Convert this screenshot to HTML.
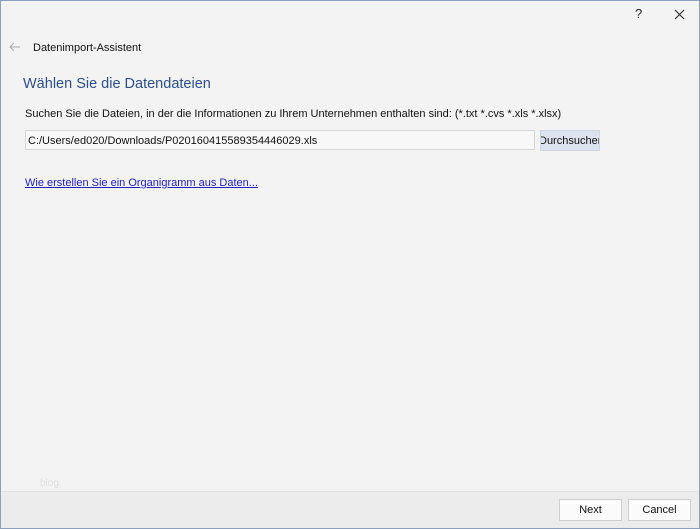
<!DOCTYPE html>
<html><head><meta charset="utf-8"><style>
*{margin:0;padding:0;box-sizing:border-box}
body{width:700px;height:529px;background:#fff;font-family:"Segoe UI","Liberation Sans",sans-serif;overflow:hidden;position:relative}
.win{position:absolute;left:0;top:0;width:700px;height:529px;border:1px solid #8aa0bd;background:#f3f3f3}
.t{position:absolute;white-space:nowrap}
</style></head><body>
<div class="win">
<div class="t" style="left:634px;top:5px;font-size:13px;color:#222">?</div>
<svg style="position:absolute;left:673px;top:8px" width="11" height="11"><path d="M1 1L10 10M10 1L1 10" stroke="#333" stroke-width="1.2"/></svg>
<svg style="position:absolute;left:8px;top:41px" width="12" height="10"><path d="M11 5H1M5 1L1 5L5 9" stroke="#aaa" stroke-width="1" fill="none"/></svg>
<div class="t" style="left:32px;top:41px;font-size:11px;color:#111">Datenimport-Assistent</div>
<div class="t" style="left:22px;top:75px;font-size:14.5px;color:#2b4f8a">Wählen Sie die Datendateien</div>
<div class="t" style="left:24px;top:107px;font-size:11px;color:#111">Suchen Sie die Dateien, in der die Informationen zu Ihrem Unternehmen enthalten sind: (*.txt *.cvs *.xls *.xlsx)</div>
<div style="position:absolute;left:24px;top:129px;width:510px;height:20px;background:#f8f8f8;border:1px solid #d6d6d6"></div>
<div class="t" style="left:27px;top:134px;font-size:11px;color:#111">C:/Users/ed020/Downloads/P020160415589354446029.xls</div>
<div style="position:absolute;left:539px;top:129px;width:60px;height:21px;background:#dde3ee;border:1px solid #cfd6e3;overflow:hidden"><div class="t" style="left:-2px;top:4px;font-size:11px;color:#111">Durchsucher</div></div>
<div class="t" style="left:24px;top:176px;font-size:11px;color:#2020c0;text-decoration:underline">Wie erstellen Sie ein Organigramm aus Daten...</div>
<div class="t" style="left:39px;top:477px;font-size:10px;color:#ddd">blog</div>
<div style="position:absolute;left:0;top:490px;width:698px;height:37px;background:#ececec;border-top:1px solid #e2e2e2"></div>
<div style="position:absolute;left:558px;top:498px;width:63px;height:22px;background:#fbfbfb;border:1px solid #cfcfcf;font-size:11px;text-align:center;line-height:20px;color:#111">Next</div>
<div style="position:absolute;left:627px;top:498px;width:63px;height:22px;background:#fbfbfb;border:1px solid #cfcfcf;font-size:11px;text-align:center;line-height:20px;color:#111">Cancel</div>
</div>
</body></html>
